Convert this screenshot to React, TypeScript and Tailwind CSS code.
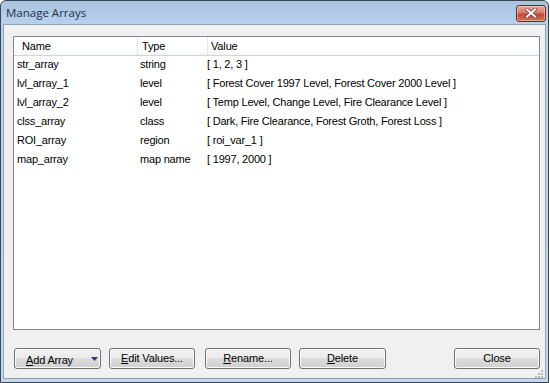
import React from "react";

const rows = [
  ["str_array", "string", "[ 1, 2, 3 ]"],
  ["lvl_array_1", "level", "[ Forest Cover 1997 Level, Forest Cover 2000 Level ]"],
  ["lvl_array_2", "level", "[ Temp Level, Change Level, Fire Clearance Level ]"],
  ["clss_array", "class", "[ Dark, Fire Clearance, Forest Groth, Forest Loss ]"],
  ["ROI_array", "region", "[ roi_var_1 ]"],
  ["map_array", "map name", "[ 1997, 2000 ]"],
];

function Btn({ children, className = "" }: { children: React.ReactNode; className?: string }) {
  return (
    <div
      className={
        "h-[21px] flex items-center justify-center rounded-[3px] border border-[#707070] bg-[linear-gradient(to_bottom,#f2f2f2_0%,#ebebeb_50%,#dddddd_50%,#cfcfcf_100%)] shadow-[inset_0_0_0_1px_#fcfcfc] text-[11px] tracking-[-0.15px] text-black " +
        className
      }
    >
      {children}
    </div>
  );
}

export default function App() {
  return (
    <div
      className="w-[550px] h-[383px] bg-white"
      style={{ fontFamily: '"Liberation Sans", Arial, sans-serif' }}
    >
      <div className="w-[549px] h-[383px] flex flex-col rounded-t-[6px] border border-[#3b4654] bg-[linear-gradient(to_bottom,#a8c3df_0px,#b9d1ea_24px,#c3d7ee_100%)]">
        {/* title bar */}
        <div className="h-[23px] flex items-center pl-[5px] pr-[2px]">
          <span
            className="text-[11.5px] text-[#1e2f45]"
            style={{ fontFamily: '"Open Sans", "Noto Sans", sans-serif' }}
          >
            Manage Arrays
          </span>
          <div className="ml-auto mt-[1px] w-[30px] h-[17px] rounded-[3px] border border-[#6b2a22] bg-[linear-gradient(to_bottom,#e9a99b_0%,#d47b6a_45%,#c24a36_55%,#d0705c_100%)] flex items-center justify-center shadow-[inset_0_0_0_1px_rgba(255,220,210,0.5)]">
            <svg width="12" height="10" viewBox="0 0 12 10">
              <path d="M2 1.5 L10 8.5 M10 1.5 L2 8.5" stroke="#7a3326" strokeWidth="3.4" strokeLinecap="square" />
              <path d="M2 1.5 L10 8.5 M10 1.5 L2 8.5" stroke="#ffffff" strokeWidth="2" strokeLinecap="square" />
            </svg>
          </div>
        </div>
        {/* client area */}
        <div className="flex-1 mx-[2px] mb-[3px] border border-[#8fa3bb] bg-[#f0f0f0] flex flex-col pt-[11px] pl-[9px] pr-[5px] pb-[9px]">
          {/* list */}
          <div className="h-[294px] border border-[#828790] bg-white flex flex-col">
            <div className="h-[19px] flex border-b border-[#d5d5d5] bg-[linear-gradient(to_bottom,#ffffff_0%,#ffffff_60%,#f6f7f8_100%)] text-[11px] tracking-[-0.15px] text-black">
              <div className="w-[124px] pl-[8px] flex items-center border-r border-[#e3e6ea]">Name</div>
              <div className="w-[70px] pl-[4px] flex items-center border-r border-[#e3e6ea]">Type</div>
              <div className="flex-1 pl-[3px] flex items-center">Value</div>
            </div>
            <div className="-mt-[1px] flex flex-col">
              {rows.map((r) => (
                <div key={r[0]} className="h-[19px] flex items-center text-[11px] tracking-[-0.2px] text-black leading-none">
                  <div className="w-[126px] pl-[3px]">{r[0]}</div>
                  <div className="w-[67px]">{r[1]}</div>
                  <div className="flex-1">{r[2]}</div>
                </div>
              ))}
            </div>
          </div>
          {/* buttons */}
          <div className="mt-[18px] flex pl-[1px]">
            <Btn className="w-[87px] relative">
              <span className="absolute left-[11px] top-[3px]">
                <u>A</u>dd Array
              </span>
              <svg className="absolute left-[76px] top-[8px]" width="7" height="4" viewBox="0 0 7 4">
                <path d="M0 0 L7 0 L3.5 4 Z" fill="#1c3d8a" />
              </svg>
            </Btn>
            <Btn className="w-[86px] ml-[8px]">
              <span>
                <u>E</u>dit Values...
              </span>
            </Btn>
            <Btn className="w-[86px] ml-[10px]">
              <span>
                <u>R</u>ename...
              </span>
            </Btn>
            <Btn className="w-[87px] ml-[8px]">
              <span>
                <u>D</u>elete
              </span>
            </Btn>
            <Btn className="w-[86px] ml-auto">
              <span>Close</span>
            </Btn>
          </div>
          <div className="relative">
            <svg className="absolute right-[-4px] top-[-1px]" width="11" height="11" viewBox="0 0 11 11">
              <g fill="#b8b8b8">
                <rect x="8" y="2" width="2" height="2" />
                <rect x="5" y="5" width="2" height="2" />
                <rect x="8" y="5" width="2" height="2" />
                <rect x="2" y="8" width="2" height="2" />
                <rect x="5" y="8" width="2" height="2" />
                <rect x="8" y="8" width="2" height="2" />
              </g>
            </svg>
          </div>
        </div>
      </div>
    </div>
  );
}
